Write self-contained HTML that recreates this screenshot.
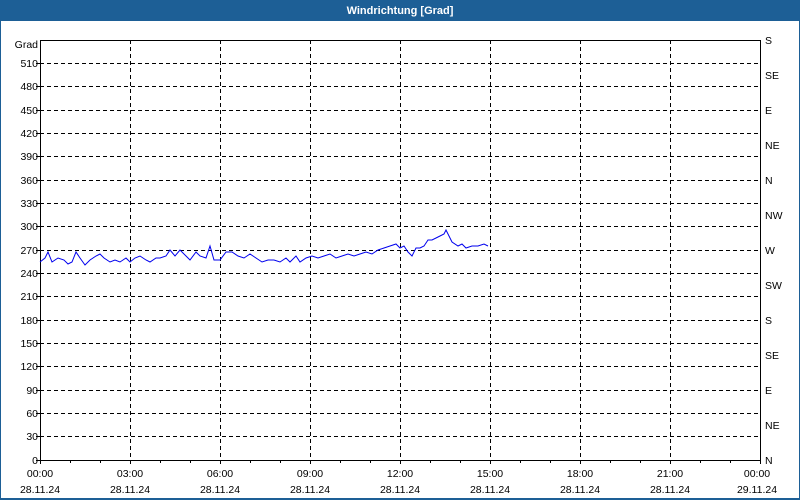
<!DOCTYPE html>
<html><head><meta charset="utf-8"><style>
html,body{margin:0;padding:0;width:800px;height:500px;overflow:hidden;background:#fff}
svg{display:block}
text{font-family:"Liberation Sans",sans-serif;font-size:10.5px;fill:#000}
</style></head><body>
<svg width="800" height="500" viewBox="0 0 800 500" xmlns="http://www.w3.org/2000/svg">
<rect x="0" y="0" width="800" height="500" fill="#1d5f96"/>
<rect x="1" y="21" width="798" height="477" fill="#fff"/>
<text x="400" y="14" text-anchor="middle" style="fill:#fff;font-weight:bold;font-size:11px">Windrichtung [Grad]</text>
<g stroke="#000" stroke-width="1" stroke-dasharray="4,3" fill="none">
<path d="M40 63.5H760M40 86.5H760M40 110.5H760M40 133.5H760M40 156.5H760M40 180.5H760M40 203.5H760M40 226.5H760M40 250.5H760M40 273.5H760M40 296.5H760M40 320.5H760M40 343.5H760M40 366.5H760M40 390.5H760M40 413.5H760M40 436.5H760"/>
<path d="M130.5 40V460M220.5 40V460M310.5 40V460M400.5 40V460M490.5 40V460M580.5 40V460M670.5 40V460"/>
</g>
<g stroke="#000" stroke-width="1" fill="none">
<path d="M40.5 40V460.5H760.5V40M40 40.5H760"/>
<path d="M40.5 460V464M70.5 460V463M100.5 460V463M130.5 460V464M160.5 460V463M190.5 460V463M220.5 460V464M250.5 460V463M280.5 460V463M310.5 460V464M340.5 460V463M370.5 460V463M400.5 460V464M430.5 460V463M460.5 460V463M490.5 460V464M520.5 460V463M550.5 460V463M580.5 460V464M610.5 460V463M640.5 460V463M670.5 460V464M700.5 460V463M730.5 460V463M760.5 460V464"/>
<path d="M36 460.5H40M36 436.5H40M36 413.5H40M36 390.5H40M36 366.5H40M36 343.5H40M36 320.5H40M36 296.5H40M36 273.5H40M36 250.5H40M36 226.5H40M36 203.5H40M36 180.5H40M36 156.5H40M36 133.5H40M36 110.5H40M36 86.5H40M36 63.5H40"/>
</g>
<polyline fill="none" stroke="#0000ee" stroke-width="1" points="40,262 45,258 48,252 52,262 58,258 64,260 68,264 72,262 76,252 80,258 85,265 90,260 96,256 100,254 104,258 110,262 115,260 120,262 126,258 130,262 135,258 140,256 146,260 150,262 156,258 160,258 166,256 170,250 175,256 180,250 186,256 190,260 196,252 200,256 206,258 210,246 214,260 220,260 226,252 232,252 238,256 244,258 250,254 256,258 262,262 268,260 274,260 280,262 286,258 290,262 296,256 300,262 306,258 312,256 318,258 324,256 330,254 336,258 342,256 348,254 354,256 360,254 366,252 372,254 378,250 384,248 390,246 396,244 400,248 404,246 408,252 412,256 416,248 420,248 424,246 428,240 432,240 436,238 440,236 444,234 446,230 449,236 452,242 458,246 462,244 466,248 472,246 478,246 484,244 488,246"/>
<g text-anchor="end">
<text x="38" y="48">Grad</text>
<text x="38" y="67">510</text><text x="38" y="90">480</text><text x="38" y="114">450</text><text x="38" y="137">420</text><text x="38" y="160">390</text><text x="38" y="184">360</text><text x="38" y="207">330</text><text x="38" y="230">300</text><text x="38" y="254">270</text><text x="38" y="277">240</text><text x="38" y="300">210</text><text x="38" y="324">180</text><text x="38" y="347">150</text><text x="38" y="370">120</text><text x="38" y="394">90</text><text x="38" y="417">60</text><text x="38" y="440">30</text><text x="38" y="464">0</text>
</g>
<g>
<text x="765" y="44">S</text><text x="765" y="79">SE</text><text x="765" y="114">E</text><text x="765" y="149">NE</text><text x="765" y="184">N</text><text x="765" y="219">NW</text><text x="765" y="254">W</text><text x="765" y="289">SW</text><text x="765" y="324">S</text><text x="765" y="359">SE</text><text x="765" y="394">E</text><text x="765" y="429">NE</text><text x="765" y="464">N</text>
</g>
<g text-anchor="middle">
<text x="40" y="477">00:00</text><text x="40" y="493">28.11.24</text>
<text x="130" y="477">03:00</text><text x="130" y="493">28.11.24</text>
<text x="220" y="477">06:00</text><text x="220" y="493">28.11.24</text>
<text x="310" y="477">09:00</text><text x="310" y="493">28.11.24</text>
<text x="400" y="477">12:00</text><text x="400" y="493">28.11.24</text>
<text x="490" y="477">15:00</text><text x="490" y="493">28.11.24</text>
<text x="580" y="477">18:00</text><text x="580" y="493">28.11.24</text>
<text x="670" y="477">21:00</text><text x="670" y="493">28.11.24</text>
<text x="757" y="477">00:00</text><text x="757" y="493">29.11.24</text>
</g>
</svg>
</body></html>
